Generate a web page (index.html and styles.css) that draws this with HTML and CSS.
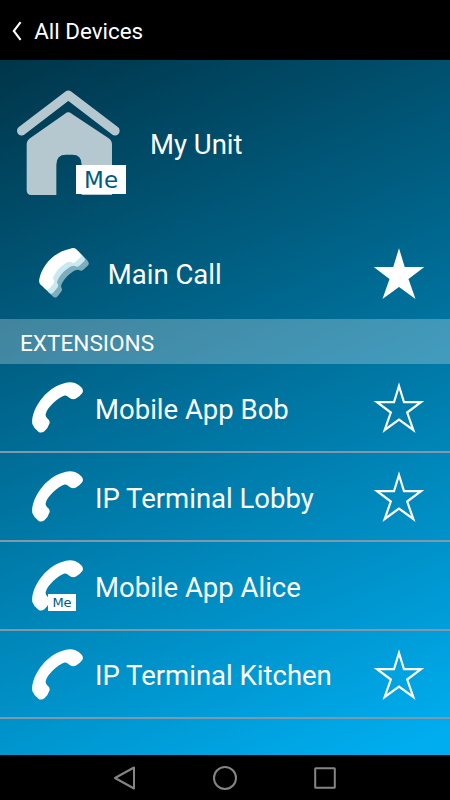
FILE: index.html
```html
<!DOCTYPE html>
<html lang="en">
<head>
<meta charset="utf-8">
<title>All Devices</title>
<link rel="stylesheet" href="styles.css">
</head>
<body>
<svg class="defs" width="0" height="0" aria-hidden="true">
  <symbol id="phone" viewBox="0 0 152 152"><path d="M101 2Q115-1 128 3Q141 8 149 18Q154 26 150 33Q142 44 130 50Q119 54 110 46Q104 39 97 40C75 48 46 75 41 95Q39 103 46 109Q55 115 52 124Q48 138 37 147Q28 153 20 149Q6 139 1 125Q-1 112 3 99C15 58 50 14 101 2Z"/></symbol>
  <symbol id="star" viewBox="0 0 52 52"><path d="M26 4L31 20.200H48L34.200 30.500L40.300 48L26 37.500L11.700 48L17.800 30.500L4 20.200H21Z"/></symbol>
</svg>
<div class="screen">
  <header class="topbar">
    <svg class="back" viewBox="0 0 10 20"><path d="M8.6 1.2L1.8 10L8.6 18.8"/></svg>
    <h1 class="title">All Devices</h1>
  </header>
  <main class="content">
    <section class="unit">
      <div class="house">
        <svg viewBox="0 0 330 325">
          <path class="roof" d="M14 119.500L154 12.500L294 119.500" />
          <path class="wall" d="M29 160Q29 149 39 142L144 68Q154 60 164 68L275 142Q285 149 285 160V312H194V221Q194 191 166 191H147Q118 191 118 221V312H43Q29 312 29 298Z"/>
        </svg>
        <span class="me">Me</span>
      </div>
      <span class="unit-name">My Unit</span>
    </section>
    <section class="main-call">
      <svg class="group" viewBox="0 0 152 152">
        <use class="far" href="#handset" x="24" y="24"/>
        <use class="mid" href="#handset" x="12" y="12"/>
        <path id="handset" d="M94 2Q105-2 112 3Q121 10 126 20Q128 25 124 29L110 42Q105 46 100 44Q94 40 86 43C70 51 52 67 44 86Q41 91 44 96Q48 101 44 107L33 121Q27 129 20 124L4 110Q-1 105 1 94C10 50 46 12 94 2Z"/>
      </svg>
      <span class="name">Main Call</span>
      <svg class="star filled"><use href="#star"/></svg>
    </section>
    <h2 class="section">EXTENSIONS</h2>
    <ul class="list">
      <li class="row"><span class="call"><svg><use href="#phone"/></svg></span><span class="name">Mobile App Bob</span><svg class="star"><use href="#star"/></svg></li>
      <li class="row"><span class="call"><svg><use href="#phone"/></svg></span><span class="name">IP Terminal Lobby</span><svg class="star"><use href="#star"/></svg></li>
      <li class="row"><span class="call"><svg><use href="#phone"/></svg><span class="me small">Me</span></span><span class="name">Mobile App Alice</span></li>
      <li class="row"><span class="call"><svg><use href="#phone"/></svg></span><span class="name">IP Terminal Kitchen</span><svg class="star"><use href="#star"/></svg></li>
    </ul>
  </main>
  <nav class="navbar">
    <svg viewBox="0 0 24 24"><path d="M21 1.500V22.500L2 12Z"/></svg>
    <svg viewBox="0 0 24 24"><circle cx="12" cy="12" r="11"/></svg>
    <svg viewBox="0 0 24 24"><rect x="2.200" y="2.200" width="19.600" height="19.600" rx=".5"/></svg>
  </nav>
</div>
</body>
</html>
```
FILE: styles.css
```css
* { box-sizing: border-box; }
body { margin: 0; background: #000; color: #fff; font-family: Roboto, sans-serif; }
h1, h2, ul { margin: 0; padding: 0; font-weight: 400; list-style: none; }
svg { display: block; overflow: visible; fill: #fff; }
.defs { position: absolute; }
.screen { width: 450px; height: 800px; display: flex; flex-direction: column; overflow: hidden; }
.topbar { height: 60px; display: flex; align-items: center; padding: 1px 0 0 12px; }
.back { width: 10px; height: 20px; fill: none; stroke: #fff; stroke-width: 2.1; }
.title { margin-left: 12.2px; font-size: 22.4px; line-height: 30px; }
.content { height: 695px; background: linear-gradient(157deg, #003549, #00aef0 98%); }
.unit { height: 170px; display: flex; align-items: center; padding-left: 17.3px; }
.house { position: relative; width: 110px; height: 108.3px; }
.house svg { width: 110px; height: 108.3px; }
.roof { fill: none; stroke: #b5c8d0; stroke-width: 28; stroke-linecap: round; stroke-linejoin: round; }
.wall { fill: #b5c8d0; }
.me { position: absolute; left: 59px; top: 74px; width: 49.5px; height: 29.5px; background: #fff; color: #005b7d; font: 23px/31px "DejaVu Sans", sans-serif; text-align: center; }
.unit-name { margin: -2px 0 0 22.7px; font-size: 27.5px; }
.main-call { height: 89px; display: flex; align-items: center; padding: 0 25.4px 0 38.5px; }
.group { width: 50.3px; height: 50.3px; margin: -3px 19px 0 0; }
.far { fill: #7caebe; }
.mid { fill: #c9e9f2; }
.name { flex: 1; font-size: 27.5px; line-height: 32px; }
.row .name { padding-top: 5px; }
.star { width: 52px; height: 52px; fill: none; stroke: #fff; stroke-width: 2.2; }
.row .star { margin-top: 2px; }
.filled { fill: #fff; margin-top: -2px; }
.section { height: 45px; padding-left: 20px; background: rgba(255,255,255,.26); font-size: 22.6px; line-height: 49px; }
.row { height: 88.85px; display: flex; align-items: center; padding: 0 25.4px 0 32px; border-bottom: 2px solid #8198aa; }
.call { position: relative; width: 51px; height: 51px; margin: 1px 12px 0 0; }
.call svg { width: 51px; height: 51px; }
.small { left: 16px; top: 34px; width: 28px; height: 17px; font-size: 13px; line-height: 18px; }
.navbar { height: 45px; display: flex; justify-content: center; align-items: center; gap: 76px; }
.navbar svg { width: 24px; height: 24px; fill: none; stroke: #858585; stroke-width: 2; stroke-linejoin: round; }
```
